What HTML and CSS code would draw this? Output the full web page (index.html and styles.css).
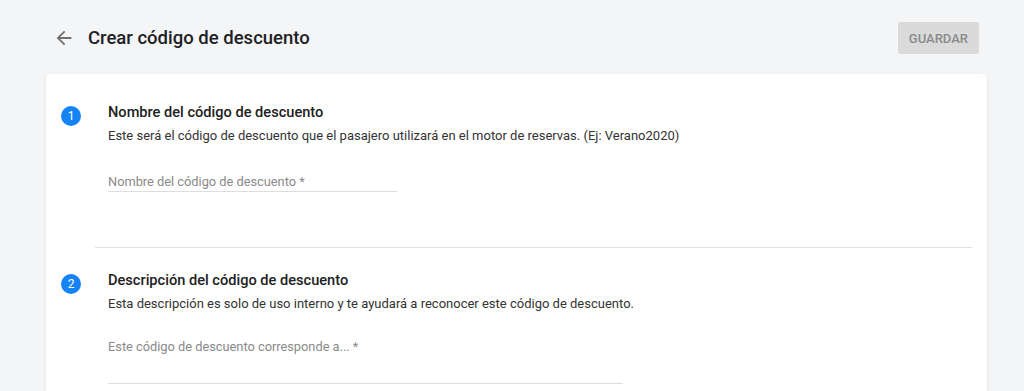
FILE: index.html
```html
<!DOCTYPE html>
<html lang="es">
<head>
  <meta charset="UTF-8" />
  <meta name="viewport" content="width=device-width, initial-scale=1.0"/>
  <title>Crear código de descuento</title>
  <link rel="stylesheet" href="styles.css">
</head>
<body>

  <!-- Top bar -->
  <div class="topbar">
    <div class="topbar-left">
      <svg class="back-icon" width="22" height="22" viewBox="0 0 24 24">
        <path d="M20 11H7.83l5.59-5.59L12 4l-8 8 8 8 1.41-1.41L7.83 13H20v-2z" fill="#707070"/>
      </svg>
      <h1 class="page-title">Crear código de descuento</h1>
    </div>
    <button class="save-btn" disabled>Guardar</button>
  </div>

  <div class="card">
    <div class="step first">
      <div class="step-num">1</div>
      <div class="step-body">
        <h3 class="step-title">Nombre del código de descuento</h3>
        <p class="step-desc">Este será el código de descuento que el pasajero utilizará en el motor de reservas. (Ej: Verano2020)</p>
        <input type="text" class="field-input" placeholder="Nombre del código de descuento *" />
      </div>
    </div>

    <div class="divider"></div>

    <div class="step">
      <div class="step-num">2</div>
      <div class="step-body">
        <h3 class="step-title">Descripción del código de descuento</h3>
        <p class="step-desc">Esta descripción es solo de uso interno y te ayudará a reconocer este código de descuento.</p>
        <textarea class="field-area" placeholder="Este código de descuento corresponde a... *"></textarea>
      </div>
    </div>
  </div>

</body>
</html>
```

FILE: styles.css
```css
body {
  margin: 0;
  font-family: Roboto, "Noto Sans", Arial, sans-serif;
  background-color: #f4f5f7;
  color: #212121;
}
.topbar {
  display: flex;
  align-items: center;
  justify-content: space-between;
  padding: 22px 45px 0 53px;
}
.topbar-left {
  display: flex;
  align-items: center;
}
.back-icon {
  display: block;
  margin-right: 13px;
}
.page-title {
  margin: 0;
  font-size: 18.5px;
  line-height: 24px;
  font-weight: 500;
  color: #202124;
}
.save-btn {
  height: 32px;
  padding: 0 11px;
  border: none;
  border-radius: 2px;
  background-color: #dadada;
  color: #8a8a8a;
  font-family: inherit;
  font-size: 13px;
  font-weight: 500;
  text-transform: uppercase;
}
.card {
  margin: 20px 37px 0 46px;
  padding: 0 15px 40px 15px;
  background-color: #ffffff;
  border-radius: 4px;
  box-shadow: 0 1px 3px rgba(0, 0, 0, 0.1);
}
.step {
  display: flex;
  align-items: flex-start;
  padding-top: 22px;
}
.step.first {
  padding-top: 28px;
  padding-bottom: 55px;
}
.step-num {
  flex: none;
  width: 20px;
  height: 20px;
  margin-top: 4px;
  border-radius: 50%;
  background-color: #1683f5;
  color: #ffffff;
  font-size: 12px;
  line-height: 20px;
  text-align: center;
}
.step-body {
  margin-left: 27px;
}
.step-title {
  margin: 0;
  font-size: 14.6px;
  line-height: 20px;
  font-weight: 500;
  color: #212121;
}
.step-desc {
  margin: 4px 0 0;
  font-size: 13px;
  line-height: 20px;
  color: #333333;
}
.field-input, .field-area {
  display: block;
  padding: 0 0 1px;
  border: none;
  border-bottom: 1px solid #dddddd;
  outline: none;
  font-family: inherit;
  font-size: 12.8px;
  line-height: 16px;
  color: #212121;
  background: transparent;
}
.field-input {
  width: 289px;
  margin-top: 28px;
}
.field-area {
  width: 515px;
  height: 44px;
  padding: 0;
  margin-top: 25px;
  resize: none;
}
.field-input::placeholder, .field-area::placeholder {
  color: #8a8a8a;
}
.divider {
  height: 1px;
  margin-left: 34px;
  background-color: #e0e0e0;
}
```
